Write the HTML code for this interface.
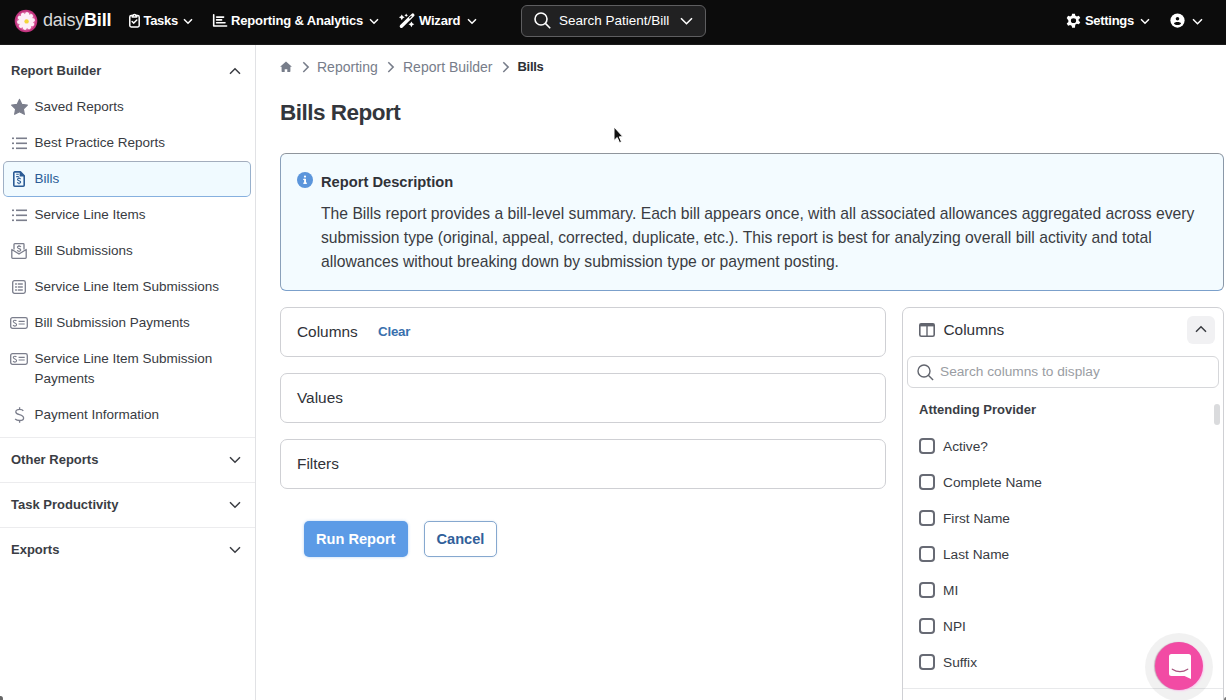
<!DOCTYPE html>
<html><head><meta charset="utf-8">
<style>
*{box-sizing:border-box;margin:0;padding:0}
html,body{width:1226px;height:700px;overflow:hidden;background:#fff;font-family:"Liberation Sans",sans-serif;color:#33363c}
.a{position:absolute;white-space:nowrap}
#hdr{position:absolute;left:0;top:0;width:1226px;height:45px;background:#0c0c0c;color:#fff;border-bottom:1px solid #1b1b1b}
.ht{position:absolute;top:0;height:41px;line-height:41px;font-size:13px;font-weight:bold;color:#fff;white-space:nowrap}
#side{position:absolute;left:0;top:45px;width:256px;height:655px;border-right:1px solid #e1e2e5;background:#fff}
.si{position:absolute;left:34.4px;height:20px;line-height:20px;font-size:13.5px;color:#383b42;white-space:nowrap}
.sh{position:absolute;left:11px;height:20px;line-height:20px;font-size:13px;font-weight:bold;color:#3a3d44;white-space:nowrap}
.div{position:absolute;left:0;width:255px;height:1px;background:#ececee}
.ic{position:absolute}
.box{position:absolute;border:1px solid #cfd0d4;border-radius:7px;background:#fff}
.lbl{position:absolute;height:20px;line-height:20px;font-size:15.4px;color:#303238;white-space:nowrap}
.cb{position:absolute;left:919px;width:16px;height:16px;border:2px solid #676a74;border-radius:4px}
.cl{position:absolute;left:943px;margin-top:0.6px;height:20px;line-height:20px;font-size:13.7px;color:#383b42;white-space:nowrap}
</style></head><body>

<div id="hdr">
  <!-- logo -->
  <svg class="ic" style="left:14.4px;top:9.3px" width="24" height="24" viewBox="0 0 24 24">
    <circle cx="12" cy="12" r="11.3" fill="#c2357f"/>
    <circle cx="12" cy="12" r="9.6" fill="#d9609f"/>
    <g fill="#fdeef7"><ellipse cx="12" cy="6.9" rx="2.3" ry="3.9" transform="rotate(10 12 12)"/><ellipse cx="12" cy="6.9" rx="2.3" ry="3.9" transform="rotate(46 12 12)"/><ellipse cx="12" cy="6.9" rx="2.3" ry="3.9" transform="rotate(82 12 12)"/><ellipse cx="12" cy="6.9" rx="2.3" ry="3.9" transform="rotate(118 12 12)"/><ellipse cx="12" cy="6.9" rx="2.3" ry="3.9" transform="rotate(154 12 12)"/><ellipse cx="12" cy="6.9" rx="2.3" ry="3.9" transform="rotate(190 12 12)"/><ellipse cx="12" cy="6.9" rx="2.3" ry="3.9" transform="rotate(226 12 12)"/><ellipse cx="12" cy="6.9" rx="2.3" ry="3.9" transform="rotate(262 12 12)"/><ellipse cx="12" cy="6.9" rx="2.3" ry="3.9" transform="rotate(298 12 12)"/><ellipse cx="12" cy="6.9" rx="2.3" ry="3.9" transform="rotate(334 12 12)"/></g>
    <circle cx="12.6" cy="12.4" r="2.2" fill="#f3d53a"/>
  </svg>
  <div class="a" style="left:43px;top:0;height:41px;line-height:41px;font-size:18px;color:#d8d8d8;letter-spacing:-0.2px">daisy<b style="color:#fff">Bill</b></div>

  <!-- tasks -->
  <svg class="ic" style="left:129px;top:13.3px" width="11" height="15" viewBox="0 0 11 15" fill="none" stroke="#fff" stroke-width="1.5" stroke-linejoin="round">
    <rect x="0.8" y="2.6" width="9.4" height="11.4" rx="1.4"/>
    <path d="M3.2 2.6h1.1a1.2 1.2 0 0 1 2.4 0h1.1v1.3H3.2z" fill="#0c0c0c"/>
    <path d="M3.1 8.5l1.7 1.6 3-3.1" stroke-linecap="round"/>
  </svg>
  <div class="ht" style="left:143.5px;letter-spacing:-0.3px">Tasks</div>
  <svg class="ic" style="left:183px;top:18px" width="10" height="7" viewBox="0 0 10 7" fill="none" stroke="#fff" stroke-width="1.5"><path d="M1 1.2l4 4 4-4"/></svg>

  <!-- reporting -->
  <svg class="ic" style="left:212px;top:13px" width="16" height="15" viewBox="0 0 16 15" fill="none" stroke="#fff" stroke-width="1.6" stroke-linecap="round" stroke-linejoin="round">
    <path d="M1.7 1.7V13H14.6"/><path d="M4.6 4.1h7M4.6 6.9h5M4.6 9.7h8.4"/>
  </svg>
  <div class="ht" style="left:231px;letter-spacing:-0.15px">Reporting &amp; Analytics</div>
  <svg class="ic" style="left:369px;top:18px" width="10" height="7" viewBox="0 0 10 7" fill="none" stroke="#fff" stroke-width="1.5"><path d="M1 1.2l4 4 4-4"/></svg>

  <!-- wizard -->
  <svg class="ic" style="left:394px;top:8px" width="30" height="26" viewBox="0 0 30 26">
    <path d="M7.4 18.2L18.8 7.1" stroke="#fff" stroke-width="3.4" stroke-linecap="round"/>
    <path d="M15.6 10L17.2 8.4" stroke="#0c0c0c" stroke-width="1.1" stroke-linecap="round"/>
    <path d="M7.8 6.4Q8.438 8.662 10.7 9.3Q8.438 9.938 7.8 12.200000000000001Q7.162 9.938 4.9 9.3Q7.162 8.662 7.8 6.4Z M12.2 5.4Q12.596 6.804 14.0 7.2Q12.596 7.596 12.2 9.0Q11.803999999999998 7.596 10.399999999999999 7.2Q11.803999999999998 6.804 12.2 5.4Z M17.4 13.4Q18.038 15.662 20.299999999999997 16.3Q18.038 16.938000000000002 17.4 19.2Q16.761999999999997 16.938000000000002 14.499999999999998 16.3Q16.761999999999997 15.662 17.4 13.4Z" fill="#fff"/>
  </svg>
  <div class="ht" style="left:419px;letter-spacing:-0.2px">Wizard</div>
  <svg class="ic" style="left:467px;top:18px" width="10" height="7" viewBox="0 0 10 7" fill="none" stroke="#fff" stroke-width="1.5"><path d="M1 1.2l4 4 4-4"/></svg>

  <!-- search -->
  <div class="a" style="left:521px;top:5px;width:185px;height:32px;border:1px solid #5e5e60;border-radius:6px;background:#212122"></div>
  <svg class="ic" style="left:534px;top:12px" width="17" height="17" viewBox="0 0 17 17" fill="none" stroke="#fff" stroke-width="1.6">
    <circle cx="7" cy="7" r="6"/><path d="M11.4 11.4l4.8 4.8"/>
  </svg>
  <div class="a" style="left:559px;top:0;height:41px;line-height:41px;font-size:13.5px;color:#fff">Search Patient/Bill</div>
  <svg class="ic" style="left:680px;top:17px" width="13" height="8" viewBox="0 0 13 8" fill="none" stroke="#fff" stroke-width="1.6"><path d="M1 1.2l5.5 5.5 5.5-5.5"/></svg>

  <!-- settings -->
  <svg class="ic" style="left:1065.3px;top:13px" width="17" height="15.4" viewBox="0 0 24 24" preserveAspectRatio="none" fill="#fff">
    <path d="M10 1h4l.6 3.1a8 8 0 0 1 2 1.2l3-1 2 3.4-2.4 2.1a8 8 0 0 1 0 2.4l2.4 2.1-2 3.4-3-1a8 8 0 0 1-2 1.2L14 23h-4l-.6-3.1a8 8 0 0 1-2-1.2l-3 1-2-3.4 2.4-2.1a8 8 0 0 1 0-2.4L2.4 7.7l2-3.4 3 1a8 8 0 0 1 2-1.2z M12 8.3a3.7 3.7 0 1 0 0 7.4 3.7 3.7 0 1 0 0-7.4z" fill-rule="evenodd"/>
  </svg>
  <div class="ht" style="left:1085px;letter-spacing:-0.3px">Settings</div>
  <svg class="ic" style="left:1140px;top:18px" width="10" height="7" viewBox="0 0 10 7" fill="none" stroke="#fff" stroke-width="1.5"><path d="M1 1.2l4 4 4-4"/></svg>

  <!-- user -->
  <svg class="ic" style="left:1170px;top:13px" width="15" height="15" viewBox="0 0 16 16">
    <circle cx="8" cy="8" r="7.6" fill="#fff"/>
    <circle cx="8" cy="6.1" r="1.9" fill="#0c0c0c"/>
    <path d="M4.2 11.2C4.6 10.3 6 9.7 8 9.7S11.4 10.3 11.8 11.2C11 12.4 9.6 12.9 8 12.9S5 12.4 4.2 11.2Z" fill="#0c0c0c"/>
  </svg>
  <svg class="ic" style="left:1192px;top:18px" width="11" height="7" viewBox="0 0 11 7" fill="none" stroke="#fff" stroke-width="1.5"><path d="M1 1.2l4.5 4.5 4.5-4.5"/></svg>
</div>

<div id="side"></div>
<!-- sidebar content (absolute coords relative to page) -->
<div class="sh" style="top:61px;">Report Builder</div>
<svg class="ic" style="left:229px;top:67px" width="12" height="8" viewBox="0 0 12 8" fill="none" stroke="#3a3c42" stroke-width="1.5"><path d="M1 6.8l5-5 5 5"/></svg>

<svg class="ic" style="left:9.8px;top:98.4px" width="19" height="19" viewBox="0 0 24 24"><path fill="#7b7e8c" d="M12 1.8l3 6.3 6.9.9-5.1 4.8 1.3 6.8L12 17.3l-6.1 3.3 1.3-6.8L2.1 9l6.9-.9z" stroke="#7b7e8c" stroke-width="1.6" stroke-linejoin="round"/></svg>
<div class="si" style="top:97px">Saved Reports</div>

<svg class="ic" style="left:12px;top:137px" width="16" height="13" viewBox="0 0 16 13" fill="#7b7e8c">
  <rect x="0" y="0.5" width="2" height="1.6"/><rect x="0" y="5.5" width="2" height="1.6"/><rect x="0" y="10.5" width="2" height="1.6"/>
  <rect x="4" y="0.5" width="11" height="1.6"/><rect x="4" y="5.5" width="11" height="1.6"/><rect x="4" y="10.5" width="11" height="1.6"/>
</svg>
<div class="si" style="top:133px">Best Practice Reports</div>

<div class="a" style="left:3px;top:161px;width:248px;height:36px;border:1px solid #93b6d9;border-color:#a3adbd #98b0cc #86b0df #9fb0c6;border-radius:5px;background:#f0faff"></div>
<svg class="ic" style="left:13px;top:171px" width="12" height="16" viewBox="0 0 12 16" fill="none" stroke="#2c5c96" stroke-width="1.6">
  <path d="M1.8 0.9h5.6l3.8 3.8v9.5a1 1 0 0 1-1 1H1.8a1 1 0 0 1-1-1V1.9a1 1 0 0 1 1-1z" stroke-linejoin="round"/>
  <path d="M7.4 0.9v3.8h3.8" fill="#2c5c96"/>
  <path d="M3.2 3.2h2.6M3.2 5.6h2.6" stroke-width="1.1"/>
  <path d="M7.6 8.1C7.3 7.6 6.8 7.3 6 7.3 5.1 7.3 4.5 7.8 4.5 8.5 4.5 10 7.7 9.4 7.7 11 7.7 11.7 7 12.2 6.05 12.2 5.2 12.2 4.6 11.9 4.3 11.3M6 6.3v1M6 12.2v1" stroke-width="1.1"/>
</svg>
<div class="si" style="top:169px;color:#2c5c96">Bills</div>

<svg class="ic" style="left:12px;top:209px" width="16" height="13" viewBox="0 0 16 13" fill="#7b7e8c">
  <rect x="0" y="0.5" width="2" height="1.6"/><rect x="0" y="5.5" width="2" height="1.6"/><rect x="0" y="10.5" width="2" height="1.6"/>
  <rect x="4" y="0.5" width="11" height="1.6"/><rect x="4" y="5.5" width="11" height="1.6"/><rect x="4" y="10.5" width="11" height="1.6"/>
</svg>
<div class="si" style="top:205px">Service Line Items</div>

<svg class="ic" style="left:11px;top:243px" width="16" height="16" viewBox="0 0 16 16" fill="none" stroke="#7b7e8c" stroke-width="1.3" stroke-linejoin="round">
  <path d="M3 6.5V1.5a.8.8 0 0 1 .8-.8h8.4a.8.8 0 0 1 .8.8v5"/>
  <path d="M0.8 6.5v8a.8.8 0 0 0 .8.8h12.8a.8.8 0 0 0 .8-.8v-8L8 11z"/>
  <path d="M9.9 3.9C9.6 3.4 9 3.1 8.1 3.1 7.1 3.1 6.4 3.6 6.4 4.3 6.4 5.9 9.8 5.3 9.8 7 9.8 7.7 9.1 8.2 8.1 8.2 7.2 8.2 6.5 7.9 6.2 7.3M8 2.1v1M8 8.2v1" stroke-width="1.1"/>
</svg>
<div class="si" style="top:241px">Bill Submissions</div>

<svg class="ic" style="left:12px;top:280px" width="14" height="14" viewBox="0 0 14 14" fill="none" stroke="#7b7e8c">
  <rect x="0.7" y="0.7" width="12.6" height="12.6" rx="1.8" stroke-width="1.3"/>
  <g fill="#7b7e8c" stroke="none"><rect x="3.2" y="3.2" width="1.6" height="1.6"/><rect x="3.2" y="6.2" width="1.6" height="1.6"/><rect x="3.2" y="9.2" width="1.6" height="1.6"/>
  <rect x="5.8" y="3.3" width="5" height="1.4"/><rect x="5.8" y="6.3" width="5" height="1.4"/><rect x="5.8" y="9.3" width="5" height="1.4"/></g>
</svg>
<div class="si" style="top:277px">Service Line Item Submissions</div>

<svg class="ic" style="left:10px;top:317px" width="18" height="12" viewBox="0 0 18 12" fill="none" stroke="#7b7e8c" stroke-width="1.3">
  <rect x="0.7" y="0.7" width="16.6" height="10.6" rx="1.8"/>
  <path d="M6.4 4.1C6.1 3.5 5.5 3.2 4.8 3.2 3.9 3.2 3.3 3.7 3.3 4.5 3.3 6.2 6.6 5.6 6.6 7.5 6.6 8.4 5.9 9.1 4.9 9.1 4 9.1 3.4 8.7 3.1 8.1" stroke-width="1.1"/>
  <path d="M8.6 4.3h6.1M8.6 7h6.1" stroke-width="1.2"/>
</svg>
<div class="si" style="top:313px">Bill Submission Payments</div>

<svg class="ic" style="left:10px;top:353px" width="18" height="12" viewBox="0 0 18 12" fill="none" stroke="#7b7e8c" stroke-width="1.3">
  <rect x="0.7" y="0.7" width="16.6" height="10.6" rx="1.8"/>
  <path d="M6.4 4.1C6.1 3.5 5.5 3.2 4.8 3.2 3.9 3.2 3.3 3.7 3.3 4.5 3.3 6.2 6.6 5.6 6.6 7.5 6.6 8.4 5.9 9.1 4.9 9.1 4 9.1 3.4 8.7 3.1 8.1" stroke-width="1.1"/>
  <path d="M8.6 4.3h6.1M8.6 7h6.1" stroke-width="1.2"/>
</svg>
<div class="si" style="top:349px">Service Line Item Submission</div>
<div class="si" style="top:369px">Payments</div>

<svg class="ic" style="left:13.5px;top:407px" width="11" height="16" viewBox="0 0 11 16" fill="none" stroke="#7b7e8c" stroke-width="1.3">
  <path d="M9.3 3.8C8.7 2.9 7.5 2.4 5.6 2.4 3.5 2.4 1.8 3.3 1.8 4.9 1.8 8.3 9.6 7 9.6 10.9 9.6 12.5 8 13.5 5.6 13.5 3.6 13.5 2 12.9 1.1 12.1M5.6 0.2V2.4M5.6 13.5V15.8"/>
</svg>
<div class="si" style="top:405px">Payment Information</div>

<div class="div" style="top:437px"></div>
<div class="sh" style="top:450px">Other Reports</div>
<svg class="ic" style="left:229px;top:456px" width="12" height="8" viewBox="0 0 12 8" fill="none" stroke="#3a3c42" stroke-width="1.5"><path d="M1 1.2l5 5 5-5"/></svg>
<div class="div" style="top:482px"></div>
<div class="sh" style="top:495px">Task Productivity</div>
<svg class="ic" style="left:229px;top:501px" width="12" height="8" viewBox="0 0 12 8" fill="none" stroke="#3a3c42" stroke-width="1.5"><path d="M1 1.2l5 5 5-5"/></svg>
<div class="div" style="top:527px"></div>
<div class="sh" style="top:540px">Exports</div>
<svg class="ic" style="left:229px;top:546px" width="12" height="8" viewBox="0 0 12 8" fill="none" stroke="#3a3c42" stroke-width="1.5"><path d="M1 1.2l5 5 5-5"/></svg>

<!-- main -->
<svg class="ic" style="left:280px;top:61px" width="12" height="11" viewBox="0 0 12 11" fill="#777d8a"><path d="M6 0.4L0.1 5.7h1.5v4.6a.6.6 0 0 0 .6.6h2.5V8.3h2.6v2.6h2.5a.6.6 0 0 0 .6-.6V5.7h1.5z"/></svg>
<svg class="ic" style="left:301.5px;top:61px" width="8" height="12" viewBox="0 0 8 12" fill="none" stroke="#777d8a" stroke-width="1.5"><path d="M1.3 1.2l4.9 4.9-4.9 4.9"/></svg>
<div class="a" style="left:317px;top:56.7px;height:20px;line-height:20px;font-size:14px;color:#777d8a">Reporting</div>
<svg class="ic" style="left:386.5px;top:61px" width="8" height="12" viewBox="0 0 8 12" fill="none" stroke="#777d8a" stroke-width="1.5"><path d="M1.3 1.2l4.9 4.9-4.9 4.9"/></svg>
<div class="a" style="left:403px;top:56.7px;height:20px;line-height:20px;font-size:14px;color:#777d8a">Report Builder</div>
<svg class="ic" style="left:501.5px;top:61px" width="8" height="12" viewBox="0 0 8 12" fill="none" stroke="#777d8a" stroke-width="1.5"><path d="M1.3 1.2l4.9 4.9-4.9 4.9"/></svg>
<div class="a" style="left:517.5px;top:56.7px;height:20px;line-height:20px;font-size:13px;font-weight:bold;color:#2d2f35;letter-spacing:-0.3px">Bills</div>

<div class="a" style="left:280px;top:97.5px;height:30px;line-height:30px;font-size:22.5px;font-weight:bold;color:#33363c;letter-spacing:-0.5px">Bills Report</div>

<!-- cursor -->
<svg class="ic" style="left:613px;top:126px" width="11" height="18" viewBox="0 0 11 18"><path d="M1 1v13.5l3.2-3 2.3 5.2 2-0.9-2.2-5H10z" fill="#111" stroke="#fff" stroke-width="1"/></svg>

<div class="a" style="left:280px;top:153px;width:944px;height:138px;border:1px solid #80a6c9;border-color:#8f959c #8a98a8 #7ba0cb #8aa0ba;border-radius:6px;background:#f3fbff"></div>
<svg class="ic" style="left:297px;top:172px" width="16" height="16" viewBox="0 0 16 16"><circle cx="8" cy="8" r="8" fill="#5b95db"/><rect x="7.1" y="6.8" width="1.9" height="5" fill="#fff"/><rect x="6.2" y="6.8" width="1.8" height="1.2" fill="#fff"/><rect x="6.2" y="10.6" width="3.8" height="1.2" fill="#fff"/><circle cx="8" cy="4.6" r="1.1" fill="#fff"/></svg>
<div class="a" style="left:321px;top:171.7px;height:20px;line-height:20px;font-size:14.7px;font-weight:bold;color:#303238">Report Description</div>
<div class="a" style="left:321px;top:201.5px;width:890px;line-height:24px;font-size:15.7px;color:#3a3c42;white-space:normal">The Bills report provides a bill-level summary. Each bill appears once, with all associated allowances aggregated across every<br>submission type (original, appeal, corrected, duplicate, etc.). This report is best for analyzing overall bill activity and total<br>allowances without breaking down by submission type or payment posting.</div>

<div class="box" style="left:280px;top:307px;width:606px;height:50px"></div>
<div class="lbl" style="left:297px;top:322px">Columns</div>
<div class="a" style="left:378px;top:322px;height:20px;line-height:20px;font-size:13.3px;font-weight:bold;color:#3a70ad;letter-spacing:-0.2px">Clear</div>
<div class="box" style="left:280px;top:373px;width:606px;height:50px"></div>
<div class="lbl" style="left:297px;top:388px">Values</div>
<div class="box" style="left:280px;top:439px;width:606px;height:50px"></div>
<div class="lbl" style="left:297px;top:454px">Filters</div>

<div class="a" style="left:304px;top:521px;width:104px;height:36px;border-radius:5px;background:#5c9be6;box-shadow:0 0 3px rgba(92,155,230,.45)"></div>
<div class="a" style="left:316px;top:529px;height:20px;line-height:20px;font-size:14.6px;font-weight:bold;color:#fff">Run Report</div>
<div class="a" style="left:424px;top:521px;width:73px;height:36px;border-radius:5px;border:1px solid #86a8cf;background:#fff;box-shadow:0 0 2px rgba(134,168,207,.3)"></div>
<div class="a" style="left:436.5px;top:529px;height:20px;line-height:20px;font-size:14.6px;font-weight:bold;color:#31609a">Cancel</div>

<!-- right panel -->
<div class="a" style="left:902px;top:307px;width:322px;height:420px;border:1px solid #cfd0d4;border-radius:7px;background:#fff"></div>
<svg class="ic" style="left:919px;top:323px" width="16" height="14" viewBox="0 0 16 14" fill="none" stroke="#62656e">
  <rect x="0.8" y="0.8" width="14.4" height="12.4" rx="1.5" stroke-width="1.6"/>
  <rect x="0.8" y="0.8" width="14.4" height="2.6" fill="#62656e" stroke="none"/>
  <path d="M8 2v11" stroke-width="1.4"/>
</svg>
<div class="lbl" style="left:943.5px;top:319.6px">Columns</div>
<div class="a" style="left:1187px;top:316px;width:28px;height:28px;border-radius:6px;background:#f1f1f3"></div>
<svg class="ic" style="left:1195px;top:325px" width="12" height="8" viewBox="0 0 12 8" fill="none" stroke="#3a3c42" stroke-width="1.5"><path d="M1 6.8l5-5 5 5"/></svg>

<div class="a" style="left:907px;top:356px;width:312px;height:32px;border:1px solid #d6d7da;border-radius:6px;background:#fff"></div>
<svg class="ic" style="left:917px;top:364px" width="17" height="17" viewBox="0 0 17 17" fill="none" stroke="#62656e" stroke-width="1.4"><circle cx="7" cy="7" r="6"/><path d="M11.3 11.3l4.8 4.8"/></svg>
<div class="a" style="left:940px;top:361.5px;height:20px;line-height:20px;font-size:13.7px;color:#9a9da3">Search columns to display</div>

<div class="a" style="left:919px;top:400px;height:20px;line-height:20px;font-size:13px;font-weight:bold;color:#3a3d44">Attending Provider</div>
<div class="a" style="left:1214px;top:404px;width:6px;height:21px;border-radius:3px;background:#dadbdd"></div>

<div class="cb" style="top:438px"></div><div class="cl" style="top:436px">Active?</div>
<div class="cb" style="top:474px"></div><div class="cl" style="top:472px">Complete Name</div>
<div class="cb" style="top:510px"></div><div class="cl" style="top:508px">First Name</div>
<div class="cb" style="top:546px"></div><div class="cl" style="top:544px">Last Name</div>
<div class="cb" style="top:582px"></div><div class="cl" style="top:580px">MI</div>
<div class="cb" style="top:618px"></div><div class="cl" style="top:616px">NPI</div>
<div class="cb" style="top:654px"></div><div class="cl" style="top:652px">Suffix</div>
<div class="a" style="left:903px;top:688px;width:320px;height:1px;background:#e8e9eb"></div>

<!-- chat bubble -->
<div class="a" style="left:1145px;top:633px;width:68px;height:68px;border-radius:50%;background:rgba(0,0,0,0.055)"></div>
<div class="a" style="left:1155px;top:642px;width:48px;height:48px;border-radius:50%;background:#f24ba4;box-shadow:-1px 0 1px rgba(120,40,80,.35),1px 1px 1.5px rgba(255,190,240,.8)"></div>
<svg class="ic" style="left:1168.5px;top:653.5px" width="22" height="25" viewBox="0 0 22 25">
  <path d="M2.5 0H19.5A2.5 2.5 0 0 1 22 2.5V25L15.5 22H2.5A2.5 2.5 0 0 1 0 19.5V2.5A2.5 2.5 0 0 1 2.5 0Z" fill="#fff"/>
  <path d="M3.3 15.2Q11 20.2 18.7 15.2" stroke="#a8557f" stroke-width="1.3" fill="none" stroke-linecap="round"/>
</svg>

<div class="a" style="left:-2px;top:696px;width:5px;height:6px;border-radius:50%;background:#666"></div>
<div class="a" style="left:1224px;top:697px;width:4px;height:5px;border-radius:50%;background:#777"></div>
</body></html>
